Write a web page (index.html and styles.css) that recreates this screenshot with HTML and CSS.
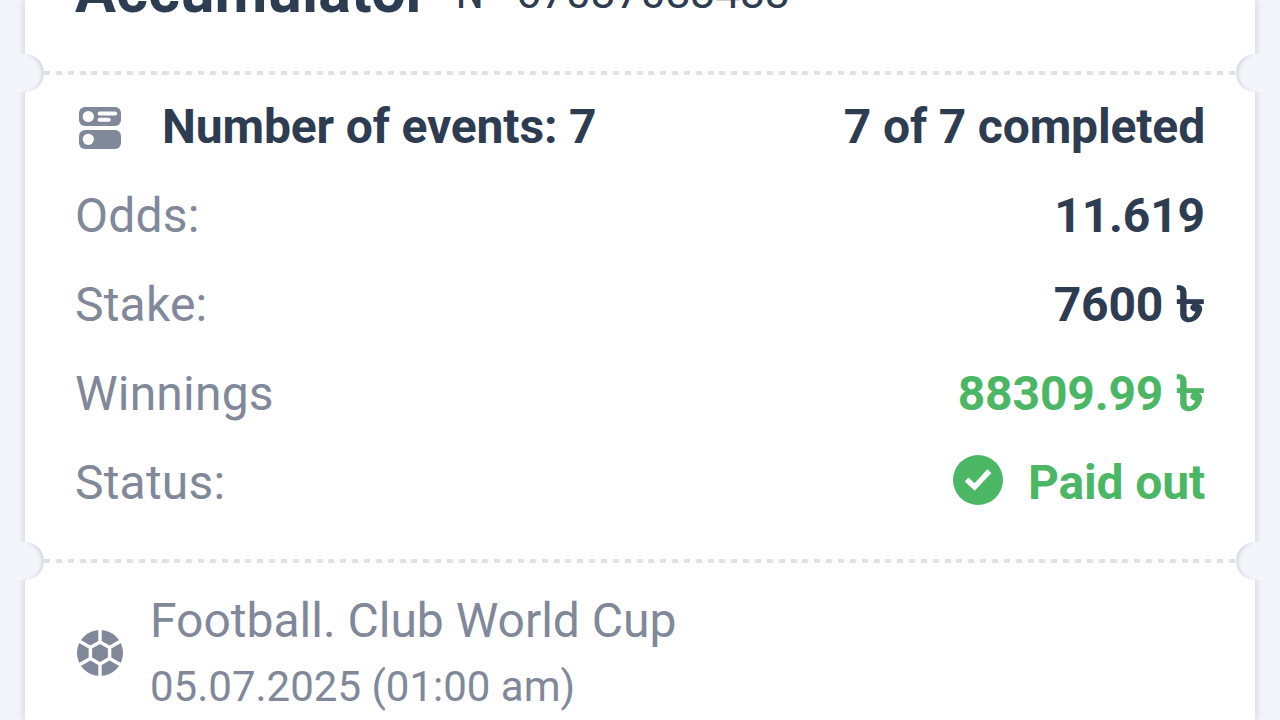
FILE: index.html
```html
<!DOCTYPE html>
<html lang="en">
<head>
	<meta charset="UTF-8">
	<title>Accumulator</title>
	<link rel="stylesheet" href="styles.css">
</head>
<body>

<div class="coupon">
	<div class="coupon_head">
		<h1>Accumulator</h1>
		<span class="coupon_num">№ 67037083433</span>
	</div>

	<div class="tear"></div>

	<div class="coupon_info">
		<div class="row">
			<svg class="ico_events" viewBox="0 0 44 44">
				<rect x="1" y="1" width="42" height="19" rx="6" fill="#808899"/>
				<rect x="1" y="24" width="42" height="19" rx="6" fill="#808899"/>
				<circle cx="10.3" cy="10.5" r="5.6" fill="#fff"/>
				<circle cx="10.3" cy="33.3" r="5.6" fill="#fff"/>
				<path d="M21.6 7.4H37.2M21.6 13.8H30.8" stroke="#fff" stroke-width="4" stroke-linecap="round"/>
			</svg>
			<b>Number of events: 7</b>
			<b class="val">7 of 7 completed</b>
		</div>
		<div class="row">
			<span>Odds:</span>
			<b class="val">11.619</b>
		</div>
		<div class="row">
			<span>Stake:</span>
			<b class="val">7600 <i class="cur">৳</i></b>
		</div>
		<div class="row">
			<span>Winnings</span>
			<b class="val green">88309.99 <i class="cur">৳</i></b>
		</div>
		<div class="row">
			<span>Status:</span>
			<b class="val green paid">
				<svg class="ico_paid" viewBox="0 0 50 50">
					<circle cx="25" cy="25" r="25" fill="#4bb765"/>
					<path d="M13.6 24.6L21.6 32L36.4 16.2" fill="none" stroke="#fff" stroke-width="5.4"/>
				</svg>
				Paid out
			</b>
		</div>
	</div>

	<div class="tear"></div>

	<div class="event">
		<svg class="ico_ball" viewBox="0 0 46 46">
			<circle cx="23" cy="23" r="23" fill="#808899"/>
			<path d="M23 12L32.6 17.5V28.5L23 34L13.4 28.5V17.5ZM23 0V12M23 34V46M32.6 17.5L43.5 11.2M32.6 28.5L43.5 34.8M13.4 17.5L2.5 11.2M13.4 28.5L2.5 34.8" fill="none" stroke="#fff" stroke-width="3.4"/>
		</svg>
		<div class="event_txt">
			<div class="event_name">Football. Club World Cup</div>
			<div class="event_date">05.07.2025 (01:00 am)</div>
		</div>
	</div>
</div>

</body>
</html>
```

FILE: styles.css
```css
*{margin:0; padding: 0; box-sizing: border-box;}
body{ height: 720px; overflow: hidden; background: #f4f5fa; font-family: Roboto, "Noto Sans", sans-serif; font-size: 48px; color: #2e3c51; }
svg{ display: block; flex: none; }

.coupon{ width: 1230px; height: 720px; margin: 0 auto; background: #fff; box-shadow: 0 0 8px rgba(60, 65, 80, .24); }

.coupon_head{ display: flex; align-items: flex-start; height: 54px; padding-left: 50px; line-height: 72px; }
.coupon_head h1{ font-size: 61px; font-weight: 700; margin-top: -45px; letter-spacing: .2px; }
.coupon_num{ font-size: 44.7px; margin: -43px 0 0 27px; letter-spacing: -.2px; word-spacing: 4px; }

/*tear line with a notch at both ends*/
.tear{ position: relative; height: 38px; background: repeating-linear-gradient(90deg, #e0e1e7 0, #e0e1e7 6px, transparent 6px, transparent 11.85px) 19px 17px / 1192px 4px no-repeat; }
.tear:before,
.tear:after{ content: ""; position: absolute; top: 0; width: 28px; height: 38px; }
.tear:before{ left: -9px; border-radius: 0 19px 19px 0; background: linear-gradient(90deg, #f4f5fa 9px, rgba(244, 245, 250, 0) 24px), radial-gradient(circle at 9px 20px, #f4f5fa 14px, #d2d4da 20px); }
.tear:after{ right: -9px; border-radius: 19px 0 0 19px; background: linear-gradient(270deg, #f4f5fa 9px, rgba(244, 245, 250, 0) 24px), radial-gradient(circle at 19px 20px, #f4f5fa 14px, #d2d4da 20px); }

/*coupon totals*/
.coupon_info{ height: 460px; padding: 0 50px; margin-top: -10px; }
.row{ display: flex; align-items: center; height: 89px; color: #808899; letter-spacing: .2px; line-height: 89px; white-space: nowrap; }
.row b{ color: #2e3c51; letter-spacing: -.15px; }
.row .val{ margin-left: auto; }
.row .green{ color: #4bb765; }
.row .paid{ display: flex; align-items: center; }
.cur{ display: inline-block; font-style: normal; letter-spacing: 0; line-height: 1; margin-left: 6px; transform: scaleX(1.22); transform-origin: right; -webkit-text-stroke: .8px; }
.ico_events{ width: 44px; height: 44px; margin: 2px 40px 0 3px; }
.ico_paid{ width: 50px; height: 50px; margin: -5px 25px 0 0; }

/*events*/
.event{ display: flex; align-items: center; padding: 5px 0 0 52px; color: #808899; }
.ico_ball{ width: 46px; height: 46px; margin: 3px 27px 0 0; }
.event_name{ line-height: 72px; }
.event_date{ font-size: 42px; line-height: 60px; }
```
